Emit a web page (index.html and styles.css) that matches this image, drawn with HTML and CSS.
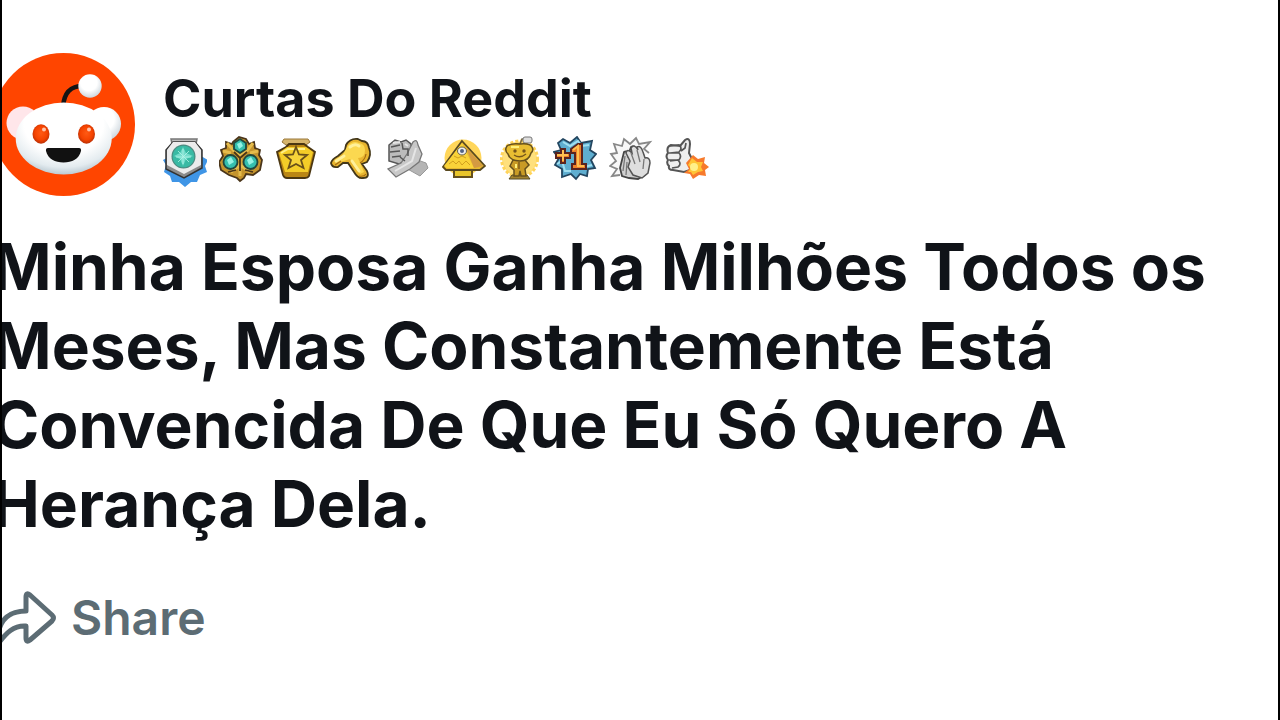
FILE: index.html
```html
<!DOCTYPE html>
<html lang="pt-BR">
<head>
<meta charset="utf-8">
<meta name="viewport" content="width=device-width, initial-scale=1">
<title>Curtas Do Reddit</title>
<link rel="stylesheet" href="styles.css">
</head>
<body>
<main class="frame">
<article class="post">
  <header class="post-header">
    <svg class="avatar" viewBox="0 0 143 143" role="img" aria-label="Avatar">
      <defs>
        <radialGradient id="head" cx=".5" cy=".3" r=".75"><stop offset=".55" stop-color="#fff"/><stop offset=".8" stop-color="#e3ebef"/><stop offset="1" stop-color="#a9bac5"/></radialGradient>
        <radialGradient id="ear" cx=".45" cy=".35" r=".7"><stop offset=".5" stop-color="#fff"/><stop offset="1" stop-color="#c5d0d8"/></radialGradient>
        <radialGradient id="eye" cx=".5" cy=".45" r=".6"><stop offset="0" stop-color="#ff5a14"/><stop offset=".6" stop-color="#f54300"/><stop offset="1" stop-color="#a92b08"/></radialGradient>
      </defs>
      <circle cx="71.500" cy="71.500" r="71.500" fill="#ff4500"/>
      <circle cx="31" cy="70" r="16.500" fill="#ffe6ea"/>
      <circle cx="112" cy="71" r="17" fill="url(#ear)"/>
      <path d="M71 54C72 39 79 33 91 33" fill="none" stroke="#141414" stroke-width="4.500"/>
      <circle cx="98" cy="33" r="11.700" fill="url(#ear)"/>
      <ellipse cx="71.700" cy="85.500" rx="48" ry="36" fill="url(#head)"/>
      <ellipse cx="49" cy="81" rx="8.500" ry="9.700" fill="url(#eye)"/><ellipse cx="94.500" cy="81" rx="8.500" ry="9.700" fill="url(#eye)"/>
      <circle cx="52" cy="76.500" r="2" fill="#ffc5ad"/><circle cx="97" cy="76.500" r="2" fill="#ffc5ad"/>
      <path d="M56 95H87Q89.500 95 89 98C87 106 80 109.500 71.500 109.500S56 106 54 98Q53.500 95 56 95Z" fill="#111"/>
    </svg>
    <div class="identity">
      <h2 class="name">Curtas Do Reddit</h2>
      <ul class="awards" aria-label="Awards">
        <li><svg class="award" viewBox="0 0 44 52">
          <path d="M21 13L27 15 34 13 38 20 45 24 42 30 44 36 37 39 34 46 28 46 22 51 16 46 9 46 7 40 1 36 3 29 0 24Z" fill="#3f95e6"/>
          <path d="M8 3H34L33 8H9Z" fill="#bcbcbc" stroke="#777" stroke-width="1.500"/>
          <path d="M10 6H32L39 14V32L21 42 3 33V14Z" fill="#8b8b8b" stroke="#333" stroke-width="1.500"/>
          <path d="M10 6H32L38 14V29L21 38 4 29V14Z" fill="#ececec"/>
          <circle cx="20.500" cy="20.500" r="12" fill="#4b8a80"/><circle cx="20.500" cy="20.500" r="10.800" fill="#39baa4"/>
          <path d="M20 11L23 17 30 20 23 23 20 30 17 23 11 20 17 17Z" fill="#74dccb"/><path d="M20 13V28M13 21H28M15 15L26 26M26 15L15 26" stroke="#b5f5e9" stroke-width=".8"/>
        </svg></li>
        <li><svg class="award" viewBox="0 0 44 52">
          <path d="M14 6L20 1 27 3 30 8 35 6 36 12 41 14 40 19 43 24 41 34 34 39 27 38 25 42 21 45 18 42 10 39 2 34 0 26 4 20 2 14 7 12 7 6 13 8Z" fill="#c5942d" stroke="#4a351a" stroke-width="1.800"/>
          <path d="M8 7L15 15 21 20 28 15 34 7M4 15L12 17M39 15L31 17M21 20V40M12 36L21 29 31 36" fill="none" stroke="#e5bc4c" stroke-width="3"/>
          <path d="M15 16L21 22 28 16M21 22V35M9 36L17 34M34 36L26 34" fill="none" stroke="#4b3517" stroke-width="1.800"/>
          <g fill="#35bfae" stroke="#20483f" stroke-width="1.800"><path d="M21 3L27 7V13L21 17 15 13V7Z"/><circle cx="11.500" cy="26" r="7"/><circle cx="31.500" cy="26" r="7"/></g>
          <path d="M18 8L22 6 24 10 20 13ZM8 24L12 21 15 26 10 29ZM28 24L32 21 35 26 30 29Z" fill="#94f3e4"/>
        </svg></li>
        <li><svg class="award" viewBox="0 0 44 52">
          <path d="M9 3H33L35 6 31 9H11L7 6Z" fill="#d6b56c" stroke="#9a783a"/>
          <path d="M11 11L14 8H29L33 11 40 16 34 40Q33 42 30 42H12Q9 42 8 39L2 16Z" fill="#ba8614" stroke="#4b3712" stroke-width="1.800"/>
          <path d="M12 11H31L38 16 33 36H10L4 17Z" fill="#f4cd28"/><path d="M6 17L13 13H30" fill="none" stroke="#fff08a" stroke-width="2"/>
          <path d="M21 11L24 18.500 32 19 26 24 28.500 32 21 28 13.500 32 16 24 10 19 18 18.500Z" fill="#f6d339" stroke="#69501a" stroke-width="1.800"/>
        </svg></li>
        <li><svg class="award" viewBox="0 0 44 52">
          <path d="M16 9Q20 2 28 3L32 5Q38 5 39 12 42 19 37 26L32 28 37 35Q40 42 33 42 28 43 24 36L18 27 13 27 8 31Q2 32 1 27 2 23 8 20L15 14Z" fill="#e8b52f" stroke="#433719" stroke-width="1.800"/>
          <path d="M17 11Q22 4 29 7 35 8 35 14 35 22 28 22L31 29 34 36 30 38 20 23 10 26 5 27 12 20Z" fill="#fbd850"/>
          <path d="M20 11Q25 7 29 10M22 25L29 35M6 25L14 20" fill="none" stroke="#fff09a" stroke-width="3" stroke-linecap="round"/>
          <path d="M30 27Q35 24 36 18M5 29L11 25M29 40Q34 41 36 38" fill="none" stroke="#a66c12" stroke-width="1.200"/>
        </svg></li>
        <li><svg class="award" viewBox="0 0 44 52">
          <path d="M26 22L40 27 42 32 34 40 18 31 14 25Z" fill="#b5b5b5" stroke="#999"/>
          <path d="M3 9L9 4 15 6 20 4 25 8 26 16 22 24 13 28 3 25Z" fill="#bcbcbc" stroke="#555" stroke-width="1.500"/>
          <path d="M21 18L27 6Q31 2 32 9L36 18 33 26 24 33 10 41 2 33 15 27Z" fill="#c8c8c8" stroke="#777" stroke-width="1.300"/>
          <path d="M5 11L14 9M4 16L14 15M6 21L15 20M16 7L17 13 22 13 22 20M14 21L19 25" fill="none" stroke="#565656" stroke-width="1.500"/>
          <path d="M7 7L14 6M19 8L22 10M9 35L26 25 30 12" fill="none" stroke="#e5e5e5" stroke-width="2"/>
        </svg></li>
        <li><svg class="award" viewBox="0 0 44 52">
          <circle cx="21" cy="22" r="18.500" fill="#ffd65a"/>
          <path d="M12 33H30V41H12Z" fill="#e9c52a" stroke="#65501d" stroke-width="2"/>
          <path d="M20 5L43 30 38 34H4L1 31Z" fill="#e6b92f" stroke="#594921" stroke-width="1.800"/>
          <path d="M20 7L32 32H5L2 30Z" fill="#f9d339"/><path d="M24 11L41 30 32 32Z" fill="#d49a42"/>
          <path d="M12 20L16 22 20 20 24 22M7 28L11 25 14 28 17 25 20 29 24 25 28 29" fill="none" stroke="#d1a01e" stroke-width="1"/>
          <ellipse cx="20" cy="15" rx="4.500" ry="4" fill="#eee" stroke="#676047"/><circle cx="20" cy="15" r="2" fill="#536485"/>
        </svg></li>
        <li><svg class="award" viewBox="0 0 44 52">
          <circle cx="21.500" cy="23" r="17.500" fill="#ffe07c"/><circle cx="21.500" cy="23" r="18" fill="none" stroke="#ffd45b" stroke-width="3" stroke-dasharray="3 2"/>
          <path d="M14 39H29L32 43H11Z" fill="#a3832e" stroke="#554a25"/>
          <path d="M15 24L12 30 16 34 16 40H21L22 35 23 40H28L27 33 31 29 27 24Z" fill="#c99b25" stroke="#65501c" stroke-width="1.500"/>
          <path d="M22 8L24 3H29" fill="none" stroke="#746846" stroke-width="1.500"/><rect x="25" y="1" width="9" height="6" rx="2" fill="#ddd" stroke="#777"/>
          <path d="M9 10Q13 7 22 8 32 7 34 11 36 14 33 17 31 25 22 25 12 25 10 18 6 14 9 10Z" fill="#e8bd32" stroke="#65501c" stroke-width="1.500"/>
          <circle cx="17" cy="15" r="1.700" fill="#75551b"/><circle cx="26" cy="15" r="1.700" fill="#75551b"/><path d="M16 19Q22 23 28 18M21 26V33" fill="none" stroke="#75551b" stroke-width="1.300"/><path d="M13 11H21M18 28V32" stroke="#fff17a" stroke-width="2"/>
        </svg></li>
        <li><svg class="award" viewBox="0 0 44 52">
          <path d="M10 3L17 7 24 1 28 7 39 5 37 14 43 18 38 24 42 32 35 33 34 40 27 38 23 43 18 38 9 41 9 33 2 29 6 22 1 16 8 14 5 7Z" fill="#5faed0" stroke="#234660" stroke-width="1.800"/>
          <path d="M10 6L17 10 25 5 29 10 36 9M4 28L9 25 12 35 18 35M39 29L31 31" fill="none" stroke="#a1dff0" stroke-width="2"/>
          <path d="M12 13V17H17V22H12V27H8V22H3V17H8V13ZM18 13L25 8H29V28H33V33H19V28H22V17H18Z" fill="#ee812b" stroke="#5a2420" stroke-width="2"/>
          <path d="M10 14V25M4 19H15M20 14L25 10V30H31" fill="none" stroke="#ffc050" stroke-width="2"/>
        </svg></li>
        <li><svg class="award" viewBox="0 0 44 52">
          <path d="M11 39L3 40 8 33 1 30 7 25 2 18 8 17 5 8 13 10 15 3 21 8 27 2 30 8 41 6 35 13 40 17" fill="#f8f8f8" stroke="#888" stroke-width="1.800"/>
          <path d="M13 40L11 32 15 16Q18 14 19 19L22 11Q25 9 26 13L30 11 34 18 38 29 36 39 29 43 20 42Z" fill="#cfcfcf" stroke="#454545" stroke-width="1.800"/>
          <path d="M21 25L17 17Q18 12 23 17L22 12Q25 7 29 14L28 11Q32 9 34 16L36 22Q41 21 41 27L39 37 33 42 24 39 19 31Z" fill="#dedede" stroke="#555" stroke-width="1.500"/>
          <path d="M16 20L14 35M18 26L17 39M22 17L26 28M28 14L31 26M35 23L34 33" stroke="#777" stroke-width="1.300"/>
        </svg></li>
        <li><svg class="award" viewBox="0 0 44 52">
          <path d="M15 10L20 4Q25 1 25 8L24 17 28 25 25 34 19 36 8 34Q3 34 4 30 1 27 3 24 0 20 3 17 1 11 6 9Z" fill="#eee" stroke="#555" stroke-width="2"/>
          <path d="M5 10L14 9Q18 12 14 16L5 17M4 17L14 17Q17 20 14 24L4 24M5 25L13 24Q17 28 13 31L7 32M16 15L20 12 21 7" fill="none" stroke="#555" stroke-width="1.700"/>
          <path d="M28 19L33 23 40 21 39 27 44 31 40 34 41 40 34 39 28 43 25 38 19 37 24 33 21 27Z" fill="#f77a2c"/><path d="M27 22L32 26 38 26 36 31 38 35 33 36 28 39 26 36 23 36 26 32 23 29Z" fill="#ffc535"/><circle cx="29" cy="31" r="4" fill="#fff08a"/>
        </svg></li>
      </ul>
    </div>
  </header>
  <h1 class="title">Minha Esposa Ganha Milhões Todos os Meses, Mas Constantemente Está Convencida De Que Eu Só Quero A Herança Dela.</h1>
  <button class="share" type="button">
    <svg class="share-icon" viewBox="0 0 66 56" aria-hidden="true"><path d="M34 21V7Q34 2 38 5L60 25Q63 28 60 31L38 50Q34 53 34 48V36C22 35 14 43 6 54V45C8 29 18 21 34 21Z" fill="none" stroke="#5c6c74" stroke-width="5" stroke-linejoin="round"/></svg>
    <span>Share</span>
  </button>
</article>
</main>
</body>
</html>
```
FILE: styles.css
```css
* {
  box-sizing: border-box;
}

body {
  margin: 0;
  background: #fff;
  color: #101318;
  font-family: Inter, "Liberation Sans", sans-serif;
}

.frame {
  min-height: 100vh;
  border: solid #000;
  border-width: 0 2px;
  overflow: hidden;
}

/* The post bleeds past the left edge of the frame. */
.post {
  margin-left: -10px;
  padding: 53px 24px 24px 0;
}

.post-header {
  display: flex;
  gap: 28px;
}

.avatar {
  flex: none;
  width: 143px;
  height: 143px;
}

.identity {
  flex: 0 1 546px;
  padding-top: 16px;
}

.name {
  margin: 0;
  font-size: 52px;
  font-weight: 700;
  line-height: 60px;
}

.awards {
  display: flex;
  justify-content: space-between;
  margin: 7px 0 0;
  padding: 0;
  list-style: none;
}

.award {
  display: block;
  width: 44px;
  height: 52px;
}

.title {
  margin: 31px 0 0;
  font-size: 64px;
  font-weight: 700;
  line-height: 79px;
}

.share {
  display: flex;
  align-items: center;
  gap: 13px;
  margin-top: 47px;
  padding: 0;
  border: 0;
  background: none;
  color: #5c6c74;
  font: 600 48px/56px Inter, "Liberation Sans", sans-serif;
  cursor: pointer;
}

.share-icon {
  width: 66px;
  height: 56px;
}
```
